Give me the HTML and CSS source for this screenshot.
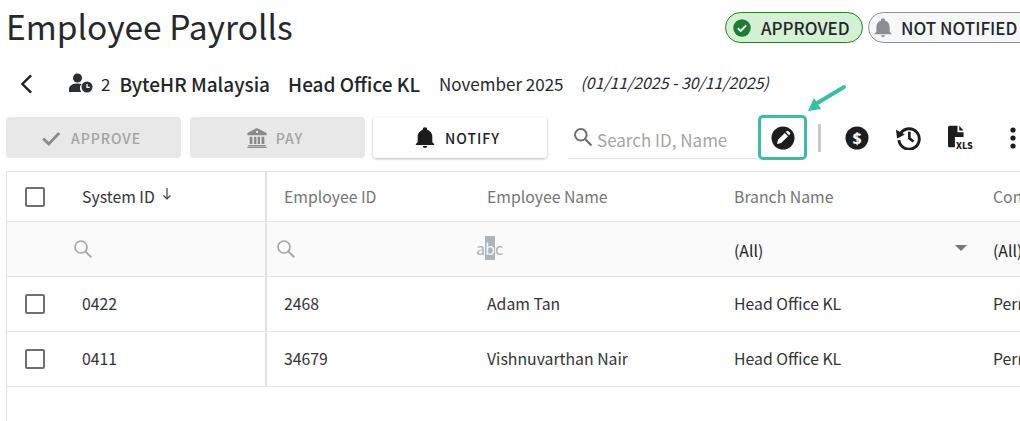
FILE: index.html
```html
<!DOCTYPE html>
<html lang="en">
<head>
<meta charset="utf-8">
<title>Employee Payrolls</title>
<link rel="stylesheet" href="styles.css">
</head>
<body>
<div class="page">
  <header class="title-row">
    <h1 class="title">Employee Payrolls</h1>
    <div class="chips">
      <span class="chip chip-green">
        <svg class="chip-icon" viewBox="0 0 24 24"><circle cx="12" cy="12" r="10.500" fill="#1e7d32"/><path d="M7 12.300l3.400 3.300L17 9" fill="none" stroke="#fff" stroke-width="2.200"/></svg>
        APPROVED
      </span>
      <span class="chip chip-grey">
        <svg class="chip-icon" viewBox="0 0 24 24"><path fill="#8b8f94" d="M12 23a2.400 2.400 0 0 0 2.400-2.200H9.600A2.400 2.400 0 0 0 12 23zm8-6.500v-5.500c0-3.800-2-6.900-5.500-7.700V2.800a2.500 2.500 0 0 0-5 0v.5C6 4.100 4 7.200 4 11v5.500L2 18.500v1h20v-1z"/></svg>
        NOT NOTIFIED
      </span>
    </div>
  </header>

  <div class="info-row">
    <svg class="back" viewBox="0 0 16 24"><path d="M13 2.500L3.500 12 13 21.500" fill="none" stroke="#1f2328" stroke-width="2.600"/></svg>
    <svg class="people" viewBox="0 0 24 20"><circle cx="8.500" cy="5" r="4.500" fill="#2a2e33"/><path fill="#2a2e33" d="M0 19v-3c0-3.500 4-5.500 8.500-5.500 1.500 0 2.800.2 4 .6A6.500 6.500 0 0 0 12.300 19z"/><circle cx="18" cy="14" r="5.500" fill="#2a2e33"/><path d="M18 11v3.300h2.800" fill="none" stroke="#fff" stroke-width="1.300"/></svg>
    <span class="count">2</span>
    <strong class="org">ByteHR Malaysia</strong>
    <strong class="branch">Head Office KL</strong>
    <span class="month">November 2025</span>
    <em class="range">(01/11/2025 - 30/11/2025)</em>
  </div>

  <div class="toolbar">
    <button class="btn btn-off btn-approve">
      <svg class="btn-icon" viewBox="0 0 24 24"><path d="M3.500 12.500l6 6L21 6.500" fill="none" stroke="#8a8a8a" stroke-width="3"/></svg>
      APPROVE
    </button>
    <button class="btn btn-off btn-pay">
      <svg class="btn-icon" viewBox="0 0 24 24"><path fill="#8a8a8a" d="M12 1L1.500 6.500V9h21V6.500zM12 4a1.300 1.300 0 1 1 0 2.600A1.300 1.300 0 0 1 12 4zM4 10.500h3v8H4zM8.700 10.500h2.600v8H8.700zM12.700 10.500h2.600v8h-2.600zM17 10.500h3v8h-3zM2.500 19.500h19V21h-19zM1.500 21.500h21V23h-21z"/></svg>
      PAY
    </button>
    <button class="btn btn-on">
      <svg class="btn-icon" viewBox="0 0 24 24"><path fill="#1b1b1b" d="M12 23a2.400 2.400 0 0 0 2.400-2.200H9.600A2.400 2.400 0 0 0 12 23zm8-6.500v-5.500c0-3.800-2-6.900-5.500-7.700V2.800a2.500 2.500 0 0 0-5 0v.5C6 4.100 4 7.200 4 11v5.500L2 18.500v1h20v-1z"/></svg>
      NOTIFY
    </button>
    <label class="search">
      <svg class="search-icon" viewBox="0 0 20 20"><circle cx="7.800" cy="7.800" r="5.800" fill="none" stroke="#6f6f6f" stroke-width="2"/><path d="M12 12l6.500 6.500" stroke="#6f6f6f" stroke-width="2.200"/></svg>
      <span class="search-text">Search ID, Name</span>
    </label>
    <div class="edit-box">
      <svg class="tool" viewBox="0 0 24 24"><circle cx="12" cy="12" r="11.500" fill="#1d1d1f"/><path fill="#fff" d="M6 18l1-4.200 6.800-6.800 3.200 3.200-6.800 6.800zM14.800 6l1-1a1 1 0 0 1 1.400 0l1.800 1.800a1 1 0 0 1 0 1.400l-1 1z"/></svg>
    </div>
    <span class="divider"></span>
    <svg class="tool tool-dollar" viewBox="0 0 24 24"><circle cx="12" cy="12" r="11.500" fill="#1d1d1f"/><text x="12" y="17.500" class="dollar">$</text></svg>
    <svg class="tool tool-history" viewBox="0 0 24 24"><path d="M4.700 7.500A9.800 9.800 0 1 1 2.800 14.500" fill="none" stroke="#1d1d1f" stroke-width="2.800"/><path fill="#1d1d1f" d="M0 4.500l8.500 4.500L1 13z"/><path d="M12.800 6.500v6.300l4 3" fill="none" stroke="#1d1d1f" stroke-width="2.600"/></svg>
    <span class="xls">
      <svg class="xls-icon" viewBox="0 0 22 26"><path fill="#1d1d1f" d="M2 0h9v7.500h7V13H8v12H2a2 2 0 0 1-2-2V2a2 2 0 0 1 2-2zM13 0l5 5.500h-5z"/></svg>
      <span class="xls-label">XLS</span>
    </span>
    <svg class="dots" viewBox="0 0 6 24"><circle cx="3" cy="4" r="2.600" fill="#1d1d1f"/><circle cx="3" cy="12" r="2.600" fill="#1d1d1f"/><circle cx="3" cy="20" r="2.600" fill="#1d1d1f"/></svg>
  </div>

  <div class="grid">
    <div class="row row-head">
      <div class="frozen"><span class="cb"></span><span class="c-sys sys-head">System ID <svg class="sort" viewBox="0 0 10 14"><path d="M5 1v11M1.500 8.500L5 12l3.500-3.500" fill="none" stroke="#444" stroke-width="1.200"/></svg></span></div>
      <div class="c c-id">Employee ID</div><div class="c c-name">Employee Name</div><div class="c c-branch">Branch Name</div><div class="c c-con">Contract</div>
    </div>
    <div class="row row-filter">
      <div class="frozen"><svg class="mag mag-sys" viewBox="0 0 20 20"><circle cx="8" cy="8" r="6" fill="none" stroke="#a6a6a6" stroke-width="1.700"/><path d="M12.300 12.300l6 6" stroke="#a6a6a6" stroke-width="1.900"/></svg></div>
      <div class="c c-id c-id-filter"><svg class="mag" viewBox="0 0 20 20"><circle cx="8" cy="8" r="6" fill="none" stroke="#a6a6a6" stroke-width="1.700"/><path d="M12.300 12.300l6 6" stroke="#a6a6a6" stroke-width="1.900"/></svg></div>
      <div class="c c-name c-abc"><span class="abc">a<span class="abc-b">b</span>c</span></div>
      <div class="c c-branch c-all"><span>(All)</span><i class="caret"></i></div>
      <div class="c c-con c-all">(All)</div>
    </div>
    <div class="row">
      <div class="frozen"><span class="cb"></span><span class="c-sys">0422</span></div>
      <div class="c c-id">2468</div><div class="c c-name">Adam Tan</div><div class="c c-branch">Head Office KL</div><div class="c c-con">Permanent</div>
    </div>
    <div class="row">
      <div class="frozen"><span class="cb"></span><span class="c-sys">0411</span></div>
      <div class="c c-id">34679</div><div class="c c-name">Vishnuvarthan Nair</div><div class="c c-branch">Head Office KL</div><div class="c c-con">Permanent</div>
    </div>
  </div>

  <svg class="callout" viewBox="0 0 44 30"><path d="M38 3L8 21" stroke="#3dbda5" stroke-width="4" stroke-linecap="round" fill="none"/><path fill="#3dbda5" d="M2 27l6-13 7 11z"/></svg>
</div>
</body>
</html>
```
FILE: styles.css
```css
* { box-sizing: border-box; }
html, body { margin: 0; padding: 0; background: #fff; }
body { font-family: "Noto Sans CJK SC", "Noto Sans", sans-serif; color: #212529; overflow: hidden; }
.page { position: relative; width: 1020px; height: 421px; overflow: hidden; }

.title-row { display: flex; align-items: flex-start; height: 68px; padding-left: 6px; }
.title { margin: 0; width: 719px; flex: none; font-size: 33.5px; line-height: 52px; font-weight: 400; color: #25282c; white-space: nowrap; }
.chips { display: flex; gap: 5px; padding-top: 12px; white-space: nowrap; }
.chip { display: inline-flex; align-items: center; height: 31px; border-radius: 16px; font-size: 17px; font-weight: 500; color: #23272b; flex: none; }
.chip-green { width: 138px; padding-left: 6px; gap: 9px; background: #d6f0d4; border: 1px solid #178a17; }
.chip-grey { width: 170px; padding-left: 4px; gap: 8px; background: #f6f7f9; border: 1px solid #8d9196; }
.chip-icon { width: 20px; height: 20px; flex: none; }

.info-row { display: flex; align-items: center; height: 32px; padding-left: 19px; padding-bottom: 2px; white-space: nowrap; }
.back { width: 15px; height: 22px; flex: none; margin-right: 35px; margin-top: 2px; }
.people { width: 24px; height: 20px; flex: none; margin-right: 8px; margin-top: 0; }
.count { font-size: 17px; margin-right: 9px; color: #25282c; }
.org, .branch { font-size: 19px; font-weight: 500; color: #212529; }
.org { margin-right: 18px; }
.branch { margin-right: 19px; }
.month { font-size: 17px; margin-right: 17px; color: #25282c; }
.range { font-size: 15.8px; color: #25282c; margin-top: -2px; }

.toolbar { display: flex; align-items: center; height: 41px; margin-top: 17px; padding-left: 6px; }
.btn { display: flex; align-items: center; justify-content: center; height: 41px; border: 0; border-radius: 4px; padding: 0 6px 0 0; font-family: inherit; font-size: 14px; font-weight: 500; letter-spacing: 1px; flex: none; }
.btn-off { width: 175px; background: #e8e8e8; color: #a3a3a3; margin-right: 9px; }
.btn-on { width: 174px; margin-left: -1px; background: #fff; color: #212121; box-shadow: 0 1px 3px rgba(0,0,0,.28); }
.btn-icon { width: 22px; height: 22px; margin-right: 9px; flex: none; }
.btn-pay .btn-icon { margin-right: 8px; }
.search { display: flex; align-items: center; flex: none; width: 188px; height: 36px; margin-left: 21px; margin-top: 6px; border-bottom: 1px solid #e2e2e6; font-size: 17px; color: #a5a5a5; padding-left: 5px; }
.search-icon { width: 20px; height: 20px; margin-right: 4px; margin-top: -6px; flex: none; }
.search-text { white-space: nowrap; margin-top: -2px; }
.edit-box { display: flex; align-items: center; justify-content: center; flex: none; width: 49px; height: 45px; margin-left: 2px; border: 3px solid #3dbda5; border-radius: 5px; }
.tool { width: 24px; height: 24px; flex: none; }
.divider { width: 3px; height: 28px; background: #c9c9c9; margin-left: 11px; margin-right: 24px; flex: none; }
.tool-history { margin-left: 27px; width: 25px; height: 25px; }
.dollar { font: 700 16px "Noto Sans", sans-serif; fill: #fff; text-anchor: middle; }
.xls { position: relative; display: block; width: 24px; height: 27px; margin-left: 27px; margin-top: 2px; flex: none; }
.xls-icon { width: 19px; height: 24px; display: block; }
.xls-label { position: absolute; left: 8px; top: 15px; font-size: 9px; line-height: 12px; font-weight: 800; color: #1d1d1f; }
.dots { width: 6px; height: 24px; margin-left: 38px; flex: none; }

.grid { margin-top: 13px; margin-left: 6px; border-left: 1px solid #e2e2e2; border-top: 1px solid #e2e2e2; width: 1014px; height: 260px; }
.row { display: flex; height: 55px; border-bottom: 1px solid #e2e2e2; font-size: 15.8px; color: #333; align-items: stretch; }
.row-head { height: 50px; color: #757575; }
.row-head .c, .row-head .c-sys { padding-bottom: 0; }
.row-filter { background: #fafafa; }
.frozen { display: flex; align-items: center; flex: none; width: 260px; border-right: 2px solid #e2e2e2; padding-left: 18px; }
.cb { width: 20px; height: 20px; border: 2px solid #707070; border-radius: 2px; flex: none; background: #fff; }
.c-sys { margin-left: 37px; padding-bottom: 2px; color: #333; display: flex; align-items: center; gap: 7px; }
.sort { width: 10px; height: 14px; margin-top: -5px; }
.c { display: flex; align-items: center; flex: none; white-space: nowrap; padding-bottom: 2px; }
.c-id { width: 220px; padding-left: 17px; }
.c-id-filter { padding-left: 8px; padding-bottom: 0; }
.c-name { width: 247px; }
.c-branch { width: 259px; }
.c-con { width: 60px; }
.mag { width: 20px; height: 20px; flex: none; margin-left: 1px; }
.mag-sys { margin-left: 48px; }
.c-all { color: #212121; padding-top: 2px; padding-bottom: 0; }
.caret { width: 0; height: 0; border-left: 6px solid transparent; border-right: 6px solid transparent; border-top: 6px solid #757575; margin-left: 192px; margin-top: -4px; }
.c-abc { margin-left: -11px; width: 258px; padding-bottom: 0; }
.abc { font-size: 16px; color: #b0b0b0; margin-top: -2px; }
.abc-b { background: #a9b4bd; color: #f4f4f4; }

.callout { position: absolute; left: 806px; top: 84px; width: 44px; height: 30px; }
```
